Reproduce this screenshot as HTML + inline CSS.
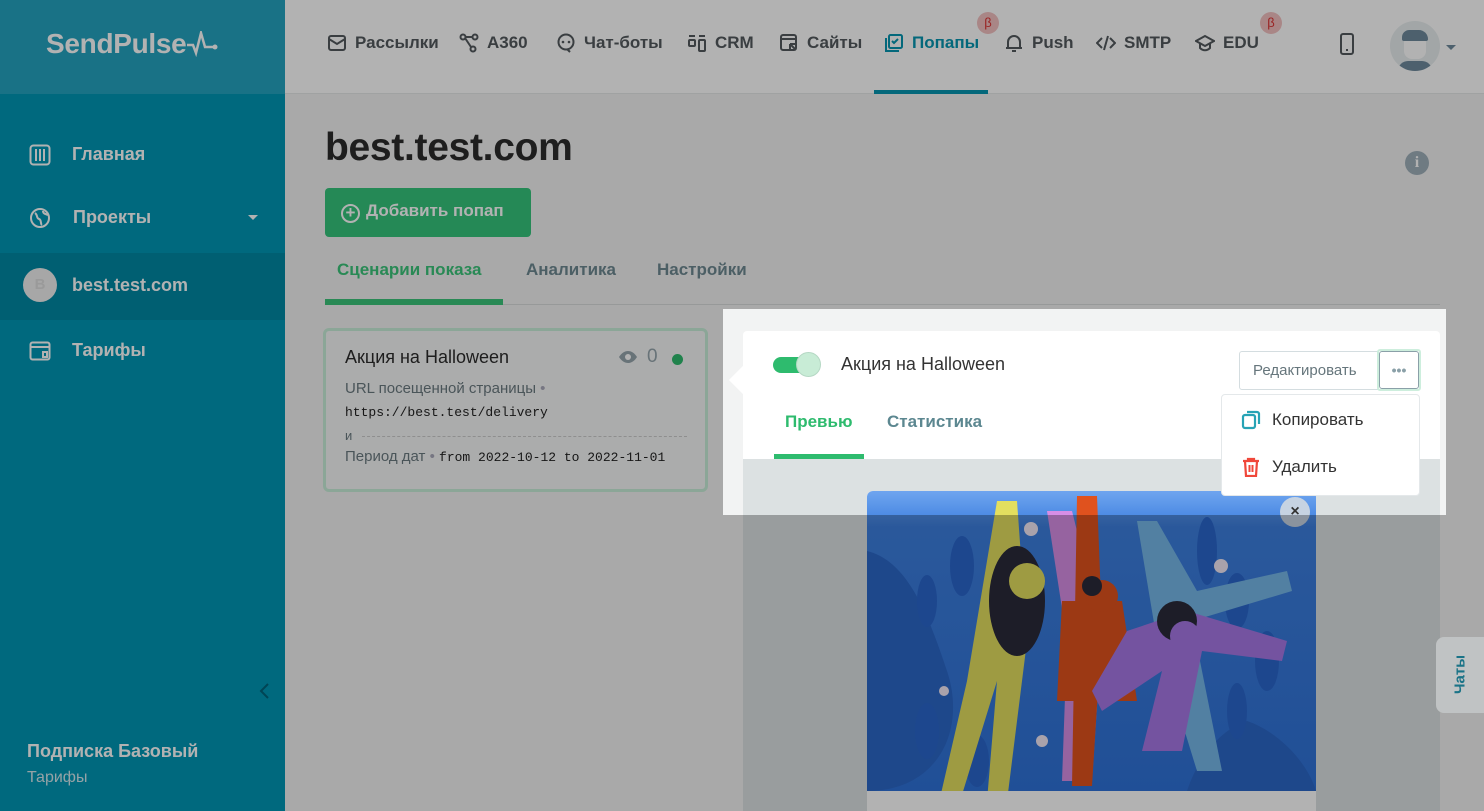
<!DOCTYPE html>
<html><head><meta charset="utf-8"><style>
*{box-sizing:border-box;margin:0;padding:0}
body{width:1484px;height:811px;overflow:hidden;position:relative;background:#f2f3f3;font-family:"Liberation Sans","Noto Sans CJK SC",sans-serif}
.abs{position:absolute}
.side{left:0;top:0;width:285px;height:811px;background:#0097b5}
.logo{left:0;top:0;width:285px;height:94px;background:#25a4c1;color:#fff;font-size:28px;font-weight:bold;padding:28px 0 0 46px;letter-spacing:-0.3px}
.si{color:#fff;font-size:18px;font-weight:bold;left:72px}
.hdr{left:285px;top:0;width:1199px;height:94px;background:#fff;border-bottom:1px solid #e6e8e8}
.nav{top:33px;font-size:17px;font-weight:bold;color:#535a5e;display:flex;align-items:center;gap:8px}
.nav svg{width:20px;height:20px}
.beta{width:22px;height:22px;border-radius:50%;background:#f3c1c1;color:#d33;font-size:13px;text-align:center;line-height:22px}
.mono{font-family:"Liberation Mono",monospace;font-size:13px;color:#222}
</style></head><body>

<div class="abs side"></div>
<div class="abs logo">SendPulse<svg width="34" height="26" viewBox="0 0 34 26" style="vertical-align:-4px"><path d="M1 14h6l3 8 5-20 4 14h8" fill="none" stroke="#fff" stroke-width="2.5"/><circle cx="29" cy="16" r="2.5" fill="#fff"/></svg></div>
<svg class="abs" style="left:29px;top:144px" width="22" height="22" viewBox="0 0 22 22"><rect x="1.5" y="1.5" width="19" height="19" rx="3" fill="none" stroke="#fff" stroke-width="2"/><path d="M7 5v12M11 5v12M15 5v12" stroke="#fff" stroke-width="2"/></svg>
<div class="abs si" style="top:144px">Главная</div>
<svg class="abs" style="left:29px;top:207px" width="22" height="22" viewBox="0 0 22 22"><circle cx="11" cy="11" r="9" fill="none" stroke="#fff" stroke-width="2"/><path d="M6 6c3 2 1 5 4 6s1 5 3 6M14 4c0 3 3 3 5 4" fill="none" stroke="#fff" stroke-width="2"/></svg>
<div class="abs si" style="top:207px;left:73px">Проекты</div>
<div class="abs" style="left:248px;top:215px;border:5px solid transparent;border-top-color:#fff"></div>
<div class="abs" style="left:0;top:253px;width:285px;height:67px;background:#0088a4"></div>
<div class="abs" style="left:23px;top:268px;width:34px;height:34px;border-radius:50%;text-align:center;line-height:34px;font-weight:bold;font-size:15px;background:#f0f0f0;color:#ddd">B</div>
<div class="abs si" style="top:275px">best.test.com</div>
<svg class="abs" style="left:29px;top:340px" width="22" height="22" viewBox="0 0 22 22"><rect x="1.5" y="2.5" width="19" height="17" rx="2" fill="none" stroke="#fff" stroke-width="2"/><path d="M1.5 7h19M14 12h4v5h-4z" fill="none" stroke="#fff" stroke-width="2"/></svg>
<div class="abs si" style="top:340px">Тарифы</div>
<svg class="abs" style="left:258px;top:682px" width="12" height="18" viewBox="0 0 12 18"><path d="M10 2 3 9l7 7" fill="none" stroke="#00637a" stroke-width="2"/></svg>
<div class="abs" style="left:27px;top:741px;color:#fff;font-size:18px;font-weight:bold">Подписка Базовый</div>
<div class="abs" style="left:27px;top:769px;color:#d5e8ee;font-size:16px">Тарифы</div>

<div class="abs hdr"></div>
<div class="abs nav" style="left:327px"><svg viewBox="0 0 20 20"><rect x="2" y="3" width="16" height="14" rx="2" fill="none" stroke="#535a5e" stroke-width="2"/><path d="M2 6l8 5 8-5" fill="none" stroke="#535a5e" stroke-width="2"/></svg>Рассылки</div>
<div class="abs nav" style="left:459px"><svg viewBox="0 0 20 20"><circle cx="4" cy="4" r="2.5" fill="none" stroke="#535a5e" stroke-width="2"/><circle cx="16" cy="4" r="2.5" fill="none" stroke="#535a5e" stroke-width="2"/><circle cx="14" cy="16" r="2.5" fill="none" stroke="#535a5e" stroke-width="2"/><path d="M6 5l6 9M6 4h8" stroke="#535a5e" stroke-width="2"/></svg>A360</div>
<div class="abs nav" style="left:556px"><svg viewBox="0 0 20 20"><circle cx="10" cy="9" r="7.5" fill="none" stroke="#535a5e" stroke-width="2"/><path d="M11 16l3 3" stroke="#535a5e" stroke-width="2"/><circle cx="7" cy="9" r="1.3" fill="#535a5e"/><circle cx="13" cy="9" r="1.3" fill="#535a5e"/></svg>Чат-боты</div>
<div class="abs nav" style="left:687px"><svg viewBox="0 0 20 20"><path d="M2 3h6M12 3h6" stroke="#535a5e" stroke-width="2"/><rect x="2" y="7" width="6" height="6" rx="1" fill="none" stroke="#535a5e" stroke-width="2"/><rect x="12" y="7" width="6" height="11" rx="1" fill="none" stroke="#535a5e" stroke-width="2"/></svg>CRM</div>
<div class="abs nav" style="left:779px"><svg viewBox="0 0 20 20"><rect x="2" y="2" width="15" height="15" rx="2" fill="none" stroke="#535a5e" stroke-width="2"/><path d="M2 6h15M11 11l6 6M11 11v5M11 11h5" stroke="#535a5e" stroke-width="2"/></svg>Сайты</div>
<div class="abs nav" style="left:884px;color:#0796b0"><svg viewBox="0 0 20 20"><rect x="5" y="2" width="13" height="13" rx="1.5" fill="none" stroke="#0796b0" stroke-width="2"/><path d="M2 5v13h13M8 8l2 2 4-4" fill="none" stroke="#0796b0" stroke-width="2"/></svg>Попапы</div>
<div class="abs" style="left:874px;top:90px;width:114px;height:4px;background:#0796b0"></div>
<div class="abs beta" style="left:977px;top:12px">β</div>
<div class="abs nav" style="left:1004px"><svg viewBox="0 0 20 20"><path d="M4 15V9a6 6 0 0 1 12 0v6H4zM2 15h16M8 18h4" fill="none" stroke="#535a5e" stroke-width="2"/></svg>Push</div>
<div class="abs nav" style="left:1096px"><svg viewBox="0 0 20 20"><path d="M6 5 1 10l5 5M14 5l5 5-5 5M12 3 8 17" fill="none" stroke="#535a5e" stroke-width="2"/></svg>SMTP</div>
<div class="abs nav" style="left:1195px"><svg viewBox="0 0 20 20"><path d="M10 3 1 8l9 5 9-5zM5 10v5c3 3 7 3 10 0v-5" fill="none" stroke="#535a5e" stroke-width="2"/></svg>EDU</div>
<div class="abs beta" style="left:1260px;top:12px">β</div>
<svg class="abs" style="left:1339px;top:33px" width="16" height="22" viewBox="0 0 16 22"><rect x="2" y="1" width="12" height="20" rx="2" fill="none" stroke="#535a5e" stroke-width="2"/><path d="M7 17h2" stroke="#535a5e" stroke-width="2"/></svg>
<div class="abs" style="left:1390px;top:21px;width:50px;height:50px;border-radius:50%;background:#e8eef0;overflow:hidden"><div class="abs" style="left:14px;top:14px;width:22px;height:24px;border-radius:8px;background:#fff"></div><div class="abs" style="left:12px;top:9px;width:26px;height:11px;border-radius:8px 10px 2px 2px;background:#6f8a9c"></div><div class="abs" style="left:8px;top:40px;width:34px;height:20px;border-radius:14px;background:#6f8a9c"></div></div>
<div class="abs" style="left:1446px;top:45px;border:5px solid transparent;border-top-color:#6f8a9c"></div>

<div class="abs" style="left:325px;top:126px;font-size:39px;font-weight:bold;color:#2b2b2b;letter-spacing:-0.3px">best.test.com</div>
<div class="abs" style="left:1405px;top:151px;width:24px;height:24px;border-radius:50%;background:#9fb0bb;color:#fff;text-align:center;font-weight:bold;font-size:16px;line-height:24px;font-family:'Liberation Serif',serif">i</div>
<div class="abs" style="left:325px;top:188px;width:206px;height:49px;background:#35c57c;border-radius:4px;color:#fff;font-size:17px;font-weight:bold;padding:13px 0 0 16px"><span style="display:inline-block;width:19px;height:19px;border:2px solid #fff;border-radius:50%;text-align:center;line-height:14px;font-size:17px;margin-right:6px;vertical-align:-2px">+</span>Добавить попап</div>
<div class="abs" style="left:325px;top:304px;width:1115px;height:1px;background:#d8dcdc"></div>
<div class="abs" style="left:337px;top:260px;font-size:17px;font-weight:bold;color:#3cc57a">Сценарии показа</div>
<div class="abs" style="left:325px;top:299px;width:178px;height:6px;background:#3cc57a"></div>
<div class="abs" style="left:526px;top:260px;font-size:17px;font-weight:bold;color:#6e8891">Аналитика</div>
<div class="abs" style="left:657px;top:260px;font-size:17px;font-weight:bold;color:#6e8891">Настройки</div>

<div class="abs" style="left:323px;top:328px;width:385px;height:164px;border:3px solid #c8eed8;border-radius:6px;background:#f5f6f6"></div>
<div class="abs" style="left:345px;top:347px;font-size:18px;color:#2b2b2b">Акция на Halloween</div>
<svg class="abs" style="left:618px;top:350px" width="20" height="14" viewBox="0 0 20 14"><path d="M1 7c5-8 13-8 18 0-5 8-13 8-18 0z" fill="#95a5ad"/><circle cx="10" cy="7" r="3" fill="#fff"/></svg>
<div class="abs" style="left:647px;top:346px;font-size:19px;color:#95a5ad">0</div>
<div class="abs" style="left:672px;top:354px;width:11px;height:11px;border-radius:50%;background:#2ebb6e"></div>
<div class="abs" style="left:345px;top:380px;font-size:15px;color:#6b7a80">URL посещенной страницы <span style="color:#aab">•</span></div>
<div class="abs mono" style="left:345px;top:405px">https://best.test/delivery</div>
<div class="abs" style="left:345px;top:428px;font-size:13px;color:#6b7a80">и</div>
<div class="abs" style="left:362px;top:436px;width:325px;border-top:1px dashed #ccc"></div>
<div class="abs" style="left:345px;top:448px;font-size:15px;color:#6b7a80">Период дат <span style="color:#aab">•</span> <span class="mono">from 2022-10-12 to 2022-11-01</span></div>

<div class="abs" style="left:743px;top:331px;width:697px;height:480px;background:#fff;border-radius:4px"></div>
<div class="abs" style="left:733px;top:370px;width:20px;height:20px;background:#fff;transform:rotate(45deg)"></div>
<div class="abs" style="left:773px;top:357px;width:44px;height:16px;border-radius:8px;background:#2ebb6e"></div>
<div class="abs" style="left:796px;top:352px;width:25px;height:25px;border-radius:50%;background:#c8ecd6;border:1px solid #b5d8c4"></div>
<div class="abs" style="left:841px;top:354px;font-size:18px;color:#333">Акция на Halloween</div>
<div class="abs" style="left:1239px;top:351px;width:140px;height:39px;border:1px solid #d4dde0;border-radius:3px 0 0 3px;font-size:15px;color:#66767c;line-height:37px;padding-left:13px">Редактировать</div>
<div class="abs" style="left:1377px;top:349px;width:44px;height:42px;border:2px solid #cdeedd;border-radius:3px"></div>
<div class="abs" style="left:1379px;top:351px;width:40px;height:38px;border:1px solid #8aa0a8;border-radius:3px;text-align:center;line-height:36px;color:#8aa0a8;font-size:14px;font-weight:bold">•••</div>
<div class="abs" style="left:785px;top:412px;font-size:17px;font-weight:bold;color:#2ebb6e">Превью</div>
<div class="abs" style="left:887px;top:412px;font-size:17px;font-weight:bold;color:#5c8790">Статистика</div>
<div class="abs" style="left:774px;top:454px;width:90px;height:5px;background:#2ebb6e"></div>
<div class="abs" style="left:743px;top:459px;width:697px;height:352px;background:#dce1e2"></div>

<div class="abs" style="left:867px;top:491px;width:449px;height:320px;background:#fff;border-radius:6px 6px 0 0;overflow:hidden">
<svg width="449" height="300" viewBox="0 0 449 300">
<defs><linearGradient id="g" x1="0" y1="0" x2="0" y2="1"><stop offset="0" stop-color="#6fa5ef"/><stop offset=".12" stop-color="#3d7fdf"/><stop offset="1" stop-color="#2f72d8"/></linearGradient></defs>
<rect width="449" height="300" fill="url(#g)"/>
<path d="M0 60c40 10 60 60 80 120s-10 120-80 120z" fill="#2c67c8"/>
<path d="M380 230c30 10 60 40 69 70H320c10-30 30-60 60-70z" fill="#2c67c8"/>
<g fill="#2a66cc"><ellipse cx="95" cy="75" rx="12" ry="30"/><ellipse cx="60" cy="110" rx="10" ry="26"/><ellipse cx="340" cy="60" rx="10" ry="34"/><ellipse cx="370" cy="110" rx="12" ry="28"/><ellipse cx="400" cy="170" rx="12" ry="30"/><ellipse cx="370" cy="220" rx="10" ry="28"/><ellipse cx="60" cy="240" rx="12" ry="28"/><ellipse cx="110" cy="270" rx="12" ry="26"/></g>
<path d="M130 10l20 0 10 140-20 160h-20l10-120-40 130h-20l30-130z" fill="#e3df5f"/>
<ellipse cx="150" cy="110" rx="28" ry="55" fill="#2a2a3a"/>
<circle cx="160" cy="90" r="18" fill="#e3df5f"/>
<path d="M180 20l25 0 30 120-10 150h-30l5-140z" fill="#d78ee6"/>
<circle cx="213" cy="90" r="16" fill="#d78ee6"/>
<path d="M210 5h20l5 130-10 160h-20z" fill="#e0521e"/>
<path d="M195 110h60l15 100h-80z" fill="#e0521e"/>
<circle cx="235" cy="105" r="16" fill="#e0521e"/>
<circle cx="225" cy="95" r="10" fill="#2a2a3a"/>
<path d="M270 30l20 0 40 70 90-20 5 20-100 30 30 150h-25l-40-130z" fill="#76b8e8"/>
<circle cx="300" cy="90" r="18" fill="#76b8e8"/>
<path d="M260 140l60-20 100 30-5 20-80-10-20 100h-40l20-80-60 40-10-20z" fill="#a678e6"/>
<circle cx="310" cy="130" r="20" fill="#2a2a3a"/>
<circle cx="318" cy="145" r="15" fill="#a678e6"/>
<g fill="#f3e9f5"><circle cx="164" cy="38" r="7"/><circle cx="354" cy="75" r="7"/><circle cx="77" cy="200" r="5"/><circle cx="175" cy="250" r="6"/></g>
</svg>
</div>
<div class="abs" style="left:1280px;top:497px;width:30px;height:30px;border-radius:50%;background:#c6d3e2;text-align:center;line-height:30px;font-weight:bold;color:#333;font-size:16px">×</div>

<svg class="abs" style="left:0;top:0;z-index:50" width="1484" height="811"><path fill-rule="evenodd" fill="rgba(0,0,0,0.3)" d="M0 0H1484V811H0Z M723 309V515H1446V309Z"/></svg>

<div class="abs" style="left:1221px;top:394px;width:199px;height:102px;background:#fff;border-radius:4px;border:1px solid #e4e8ea;z-index:60">
<svg class="abs" style="left:19px;top:15px" width="20" height="20" viewBox="0 0 20 20"><rect x="2" y="5" width="12" height="13" rx="2" fill="none" stroke="#26a3b5" stroke-width="2.2"/><path d="M6 2h10a2 2 0 0 1 2 2v10" fill="none" stroke="#26a3b5" stroke-width="2.2"/></svg>
<div class="abs" style="left:50px;top:15px;font-size:17px;color:#333">Копировать</div>
<svg class="abs" style="left:19px;top:62px" width="20" height="20" viewBox="0 0 20 20"><path d="M2 4h16M7 4V2h6v2M4 4l1 15h10l1-15" fill="none" stroke="#f0473a" stroke-width="2.2"/><path d="M8.5 8v7M11.5 8v7" stroke="#f0473a" stroke-width="2"/></svg>
<div class="abs" style="left:50px;top:62px;font-size:17px;color:#333">Удалить</div>
</div>

<div class="abs" style="left:1436px;top:637px;width:48px;height:76px;background:#c0c3c4;border-radius:8px 0 0 8px;z-index:60"></div>
<div class="abs" style="left:1440px;top:666px;z-index:61;transform:rotate(-90deg);color:#1a7387;font-weight:bold;font-size:15px;width:40px;text-align:center">Чаты</div>
</body></html>
